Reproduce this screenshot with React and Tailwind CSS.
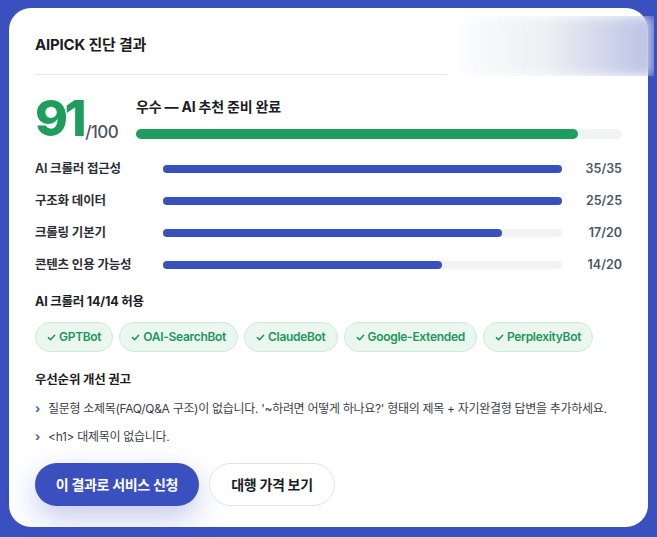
import React from "react";

const scores = [
  { label: "AI 크롤러 접근성", value: 35, max: 35 },
  { label: "구조화 데이터", value: 25, max: 25 },
  { label: "크롤링 기본기", value: 17, max: 20 },
  { label: "콘텐츠 인용 가능성", value: 14, max: 20 },
];

const bots = ["GPTBot", "OAI-SearchBot", "ClaudeBot", "Google-Extended", "PerplexityBot"];

const tips = [
  "질문형 소제목(FAQ/Q&A 구조)이 없습니다. '~하려면 어떻게 하나요?' 형태의 제목 + 자기완결형 답변을 추가하세요.",
  "<h1> 대제목이 없습니다.",
];

function App() {
  return (
    <div
      className="min-h-screen w-full bg-[#3a50bf] px-[9px] pt-[8px] pb-[10px]"
      style={{ fontFamily: 'Inter, "Noto Sans CJK KR", sans-serif' }}
    >
      <div className="relative h-[519px] rounded-[22px] bg-white px-[26px] pt-[27px] text-[#1a1d24]">
        {/* blurred region top right */}
        <div className="absolute right-[-6px] top-[8px] h-[60px] w-[208px] overflow-hidden">
          <div className="h-full w-full bg-gradient-to-r from-white via-[#eceef2] to-[#b9c0e4] blur-[6px]" />
        </div>

        <h2 className="text-[15px] font-bold leading-[20px] tracking-[-0.2px]">AIPICK 진단 결과</h2>
        <div className="mt-[19px] h-px w-[412px] bg-[#e6e8ec]" />

        {/* score */}
        <div className="mt-[17px] flex items-start">
          <div className="flex items-end">
            <span className="text-[50px] font-extrabold leading-[52px] tracking-[-3.5px] text-[#1f9d5c]">91</span>
            <span className="mb-[2px] ml-[2px] text-[17px] font-medium leading-[20px] tracking-[-0.6px] text-[#4b5563]">/100</span>
          </div>
          <div className="ml-[18px] flex-1 pt-[6px]">
            <div className="text-[14px] font-bold leading-[18px] tracking-[-0.2px]">우수 — AI 추천 준비 완료</div>
            <div className="mt-[13px] h-[10px] w-full rounded-full bg-[#f2f3f5]">
              <div className="h-full w-[91%] rounded-full bg-[#1f9d5c]" />
            </div>
          </div>
        </div>

        {/* breakdown */}
        <div className="mt-[16px] flex flex-col gap-[14px]">
          {scores.map((s) => (
            <div key={s.label} className="flex h-[18px] items-center">
              <span className="w-[128px] text-[12.5px] font-semibold tracking-[-0.2px] text-[#2a2d35]">{s.label}</span>
              <div className="h-[8px] flex-1 rounded-full bg-[#f2f3f5]">
                <div
                  className="h-full rounded-full bg-[#3a50bf]"
                  style={{ width: `${(s.value / s.max) * 100}%` }}
                />
              </div>
              <span className="w-[60px] text-right text-[12.5px] font-semibold text-[#4b5563]">
                {s.value}/{s.max}
              </span>
            </div>
          ))}
        </div>

        {/* crawlers */}
        <div className="mt-[19px] text-[12.5px] font-bold leading-[18px] tracking-[-0.2px]">AI 크롤러 14/14 허용</div>
        <div className="mt-[11px] flex gap-[6px]">
          {bots.map((b) => (
            <span
              key={b}
              className="flex h-[30px] items-center gap-[3px] rounded-full border border-[#cfe9d9] bg-[#eaf7ef] px-[11px] text-[12px] font-semibold tracking-[-0.3px] text-[#22965a]"
            >
              <svg width="9" height="9" viewBox="0 0 10 10" fill="none">
                <path d="M1.5 5.2 L4 7.5 L8.5 2.5" stroke="#22965a" strokeWidth="1.7" strokeLinecap="round" strokeLinejoin="round" />
              </svg>
              {b}
            </span>
          ))}
        </div>

        {/* tips */}
        <div className="mt-[19px] text-[12.5px] font-bold leading-[18px] tracking-[-0.2px]">우선순위 개선 권고</div>
        <ul className="mt-[11px] flex flex-col gap-[10px]">
          {tips.map((t) => (
            <li key={t} className="flex items-center text-[12px] leading-[18px] tracking-[-0.3px] text-[#3b3f48]">
              <span className="w-[13px] text-[12px] font-bold text-[#3a50bf]">›</span>
              {t}
            </li>
          ))}
        </ul>

        {/* actions */}
        <div className="mt-[17px] flex gap-[10px]">
          <button className="h-[43px] w-[164px] rounded-full bg-[#3a50bf] text-[14px] font-bold tracking-[-0.3px] text-white shadow-[0_12px_30px_rgba(58,80,191,0.3)]">
            이 결과로 서비스 신청
          </button>
          <button className="h-[43px] w-[126px] rounded-full border border-[#dfe2e7] bg-white text-[14px] font-bold tracking-[-0.3px] text-[#1a1d24]">
            대행 가격 보기
          </button>
        </div>
      </div>
    </div>
  );
}

export default App;
